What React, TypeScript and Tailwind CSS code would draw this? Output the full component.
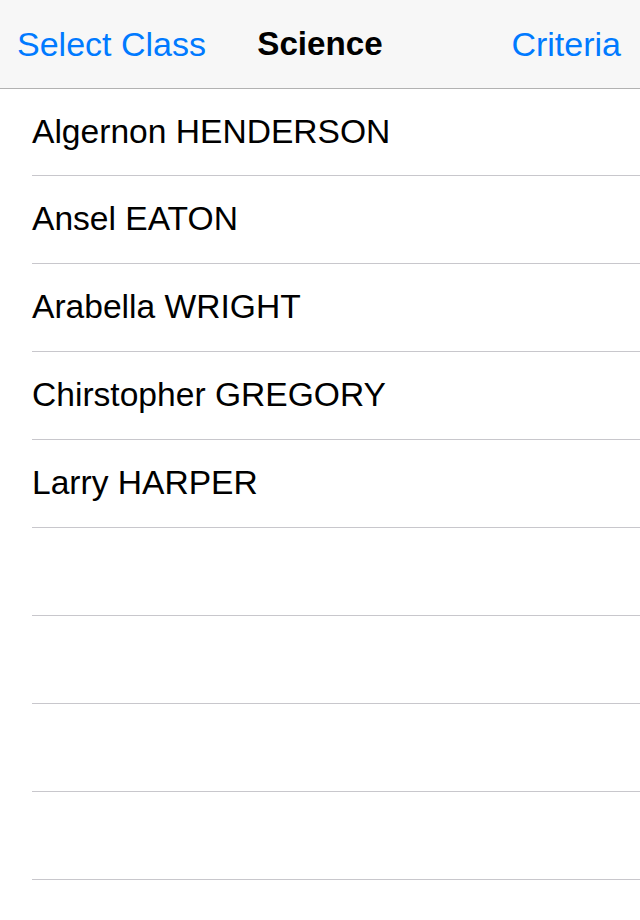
const students = [
  'Algernon HENDERSON',
  'Ansel EATON',
  'Arabella WRIGHT',
  'Chirstopher GREGORY',
  'Larry HARPER',
];

function Row({ name, first }: { name?: string; first?: boolean }) {
  return (
    <div className="pl-8">
      <div
        className={`flex items-center border-b border-[#c8c7cc] text-[33.6px] text-black ${
          first ? 'h-[87px]' : 'h-[88px]'
        }`}
      >
        {name}
      </div>
    </div>
  );
}

export default function App() {
  const empty = Array.from({ length: 5 });

  return (
    <div
      className="h-[920px] w-[640px] overflow-hidden bg-white"
      style={{ fontFamily: '"Liberation Sans", Arial, sans-serif' }}
    >
      <div className="relative flex h-[88px] items-center justify-between bg-[#f7f7f7] pl-[17px] pr-[19px] text-[34px]">
        <span className="text-[#007aff]">Select Class</span>
        <span className="absolute left-1/2 -translate-x-1/2 text-[33.2px] font-bold text-black">Science</span>
        <span className="text-[#007aff]">Criteria</span>
      </div>
      <div className="h-px bg-[#b2b2b2]" />

      {students.map((s, i) => (
        <Row key={s} name={s} first={i === 0} />
      ))}
      {empty.map((_, i) => (
        <Row key={i} />
      ))}
    </div>
  );
}
